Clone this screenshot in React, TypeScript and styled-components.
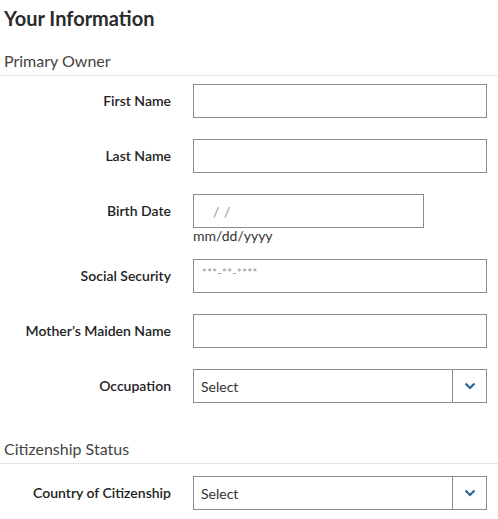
import styled, { createGlobalStyle } from "styled-components";

const GlobalStyle = createGlobalStyle`
  body {
    margin: 0;
    background: #fff;
    font-family: Lato, "Liberation Sans", sans-serif;
    color: #222;
  }
`;

const Page = styled.div`
  width: 498px;
  padding-top: 6px;
`;

const Title = styled.h1`
  margin: 0 0 0 4px;
  font-size: 20px;
  font-weight: 700;
  color: #2b2b2b;
  line-height: 24px;
`;

const SectionTitle = styled.h2<{ $top: number }>`
  margin: ${(p) => p.$top}px 0 0;
  padding: 0 0 4px 4px;
  font-size: 16px;
  font-weight: 400;
  color: #444;
  line-height: 20px;
  border-bottom: 1px solid #e4e4e4;
`;

const Fields = styled.div<{ $top: number }>`
  display: flex;
  flex-direction: column;
  gap: 21px;
  padding-top: ${(p) => p.$top}px;
`;

const Row = styled.div`
  display: grid;
  grid-template-columns: 171px 294px;
  column-gap: 22px;
  align-items: start;
`;

const Label = styled.label`
  text-align: right;
  font-size: 14px;
  font-weight: 600;
  color: #222;
  line-height: 34px;
`;

const InputBox = styled.div<{ $width?: number; $pad?: number }>`
  box-sizing: border-box;
  width: ${(p) => p.$width ?? 294}px;
  height: 34px;
  border: 1px solid #8c8c8c;
  background: #fff;
  display: flex;
  align-items: center;
  padding-left: ${(p) => p.$pad ?? 8}px;
`;

const Placeholder = styled.span<{ $size: number; $lift?: number }>`
  font-size: ${(p) => p.$size}px;
  color: #8f8f8f;
  letter-spacing: 0.5px;
  margin-top: ${(p) => -(p.$lift ?? 0)}px;
`;

const Hint = styled.div`
  font-size: 14px;
  color: #333;
  line-height: 16px;
  margin-bottom: -6px;
`;

const SelectBox = styled.div`
  box-sizing: border-box;
  width: 294px;
  height: 34px;
  border: 1px solid #8c8c8c;
  display: flex;
  align-items: stretch;
`;

const SelectText = styled.span`
  flex: 1;
  display: flex;
  align-items: center;
  padding-left: 7px;
  font-size: 14px;
  color: #333;
`;

const Arrow = styled.span`
  width: 33px;
  border-left: 1px solid #8c8c8c;
  display: flex;
  align-items: center;
  justify-content: center;
`;

function Chevron() {
  return (
    <svg width="12" height="8" viewBox="0 0 12 8">
      <path d="M1.5 1.5 L6 6 L10.5 1.5" fill="none" stroke="#2a6496" strokeWidth="2.2" />
    </svg>
  );
}

function Select() {
  return (
    <SelectBox>
      <SelectText>Select</SelectText>
      <Arrow>
        <Chevron />
      </Arrow>
    </SelectBox>
  );
}

export default function App() {
  return (
    <Page>
      <GlobalStyle />
      <Title>Your Information</Title>
      <SectionTitle $top={21}>Primary Owner</SectionTitle>
      <Fields $top={8}>
        <Row>
          <Label>First Name</Label>
          <InputBox />
        </Row>
        <Row>
          <Label>Last Name</Label>
          <InputBox />
        </Row>
        <Row>
          <Label>Birth Date</Label>
          <div>
            <InputBox $width={231} $pad={19}>
              <Placeholder $size={14}>/ /</Placeholder>
            </InputBox>
            <Hint>mm/dd/yyyy</Hint>
          </div>
        </Row>
        <Row>
          <Label>Social Security</Label>
          <InputBox>
            <Placeholder $size={11} $lift={7}>***-**-****</Placeholder>
          </InputBox>
        </Row>
        <Row>
          <Label>Mother’s Maiden Name</Label>
          <InputBox />
        </Row>
        <Row>
          <Label>Occupation</Label>
          <Select />
        </Row>
      </Fields>
      <SectionTitle $top={36}>Citizenship Status</SectionTitle>
      <Fields $top={12}>
        <Row>
          <Label>Country of Citizenship</Label>
          <Select />
        </Row>
      </Fields>
    </Page>
  );
}
